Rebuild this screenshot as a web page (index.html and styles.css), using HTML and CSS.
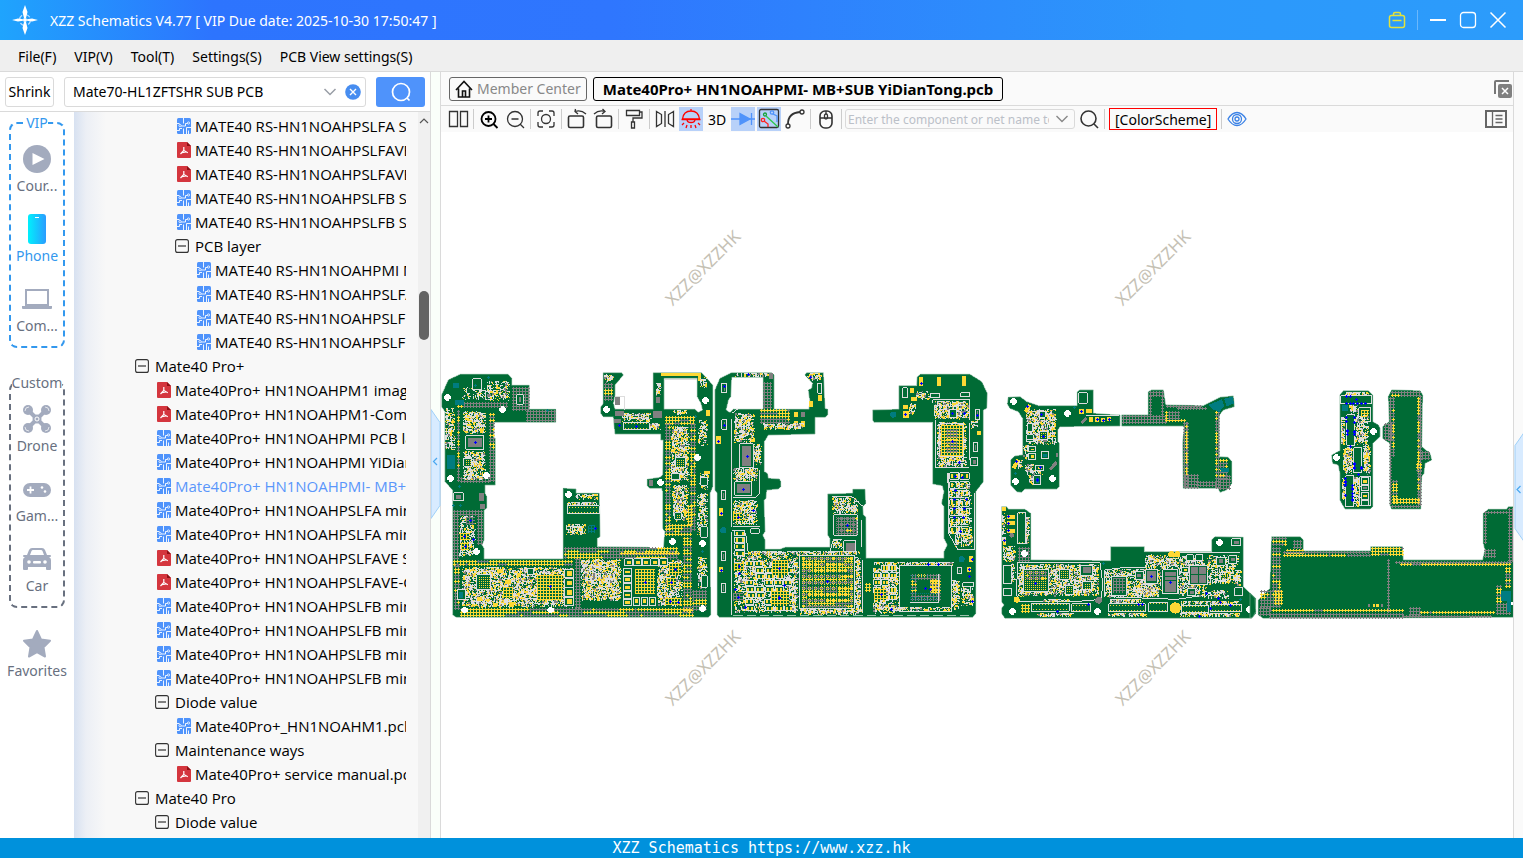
FILE: index.html
```html
<!DOCTYPE html>
<html lang="en">
<head>
  <meta charset="UTF-8" />
  <meta name="viewport" content="width=device-width, initial-scale=1.0"/>
  <title>XZZ Schematics</title>
  <link rel="stylesheet" href="styles.css">
</head>
<body>
  <!-- shared icons -->
  <svg class="defs" width="0" height="0" aria-hidden="true">
    <symbol id="i-pcb" viewBox="0 0 14 16">
      <rect width="14" height="16" rx="1.5" fill="#4f93fb"/>
      <path d="M6.500 0v5.500M0 5.500h2.500M4 8h4.500V5.500h2M0 12.500h2.500v-2h2.500M6.500 16v-5.500M9.500 16V9.500H14M11.500 16v-3.500" fill="none" stroke="#fff" stroke-width=".9"/>
      <circle cx="3" cy="7.500" r="1.100" fill="#4f93fb" stroke="#fff" stroke-width=".8"/><circle cx="11.500" cy="5" r="1.100" fill="#4f93fb" stroke="#fff" stroke-width=".8"/>
    </symbol>
    <symbol id="i-pdf" viewBox="0 0 14 16">
      <path d="M1 0h9l4 4v11a1 1 0 0 1-1 1H1a1 1 0 0 1-1-1V1a1 1 0 0 1 1-1z" fill="#d4363e"/>
      <path d="M10 0l4 4h-4z" fill="#8d1015"/>
      <path d="M6.800 5v3.500L3.500 12M6.800 8.500l4 2.200M5 10.700l4-.8" fill="none" stroke="#fff" stroke-width="1.200"/>
    </symbol>
    <symbol id="i-minus" viewBox="0 0 14 14">
      <rect x=".6" y=".6" width="12.800" height="12.800" rx="2" fill="none" stroke="#333" stroke-width="1.100"/>
      <path d="M3 7h8" stroke="#333" stroke-width="1.200"/>
    </symbol>
  </svg>

  <header class="titlebar">
    <svg class="logo" width="26" height="30" viewBox="0 0 26 30">
      <circle cx="13" cy="15" r="5.500" fill="none" stroke="#bfe0ff" stroke-width="1.200" stroke-dasharray="5 3.600"/>
      <path d="M13 0l2.500 7-1.500 6h-2l-1.500-6zM13 30l2.500-7-1.500-6h-2l-1.500 6zM0 15l6-1.500 5 .8v1.400l-5 .8zM26 15l-6-1.500-5 .8v1.400l5 .8z" fill="#fff"/>
      <circle cx="13" cy="15" r="2" fill="#fff"/>
    </svg>
    <span class="title">XZZ Schematics V4.77 [ VIP Due date: 2025-10-30 17:50:47 ]</span>
    <div class="window-buttons">
      <button aria-label="Toolbox"><svg width="20" height="20" viewBox="0 0 20 20" fill="none" stroke="#e3e23c" stroke-width="1.500"><rect x="2.500" y="5.500" width="15" height="12" rx="2"/><path d="M6.500 5.500V4q0-1.500 1.500-1.500h4q1.500 0 1.500 1.500v1.500M5.500 10.500h9"/></svg></button>
      <i></i>
      <button aria-label="Minimize"><svg width="20" height="20" viewBox="0 0 20 20"><path d="M2 10h16" stroke="#fff" stroke-width="2"/></svg></button>
      <button aria-label="Maximize"><svg width="20" height="20" viewBox="0 0 20 20"><rect x="2.500" y="2.500" width="15" height="15" rx="3" fill="none" stroke="#fff" stroke-width="1.300"/></svg></button>
      <button aria-label="Close"><svg width="20" height="20" viewBox="0 0 20 20"><path d="M2.500 2.500l15 15M17.500 2.500l-15 15" stroke="#fff" stroke-width="1.500"/></svg></button>
    </div>
  </header>

  <nav class="menubar">
    <button>File(F)</button>
    <button>VIP(V)</button>
    <button>Tool(T)</button>
    <button>Settings(S)</button>
    <button>PCB View settings(S)</button>
  </nav>

  <main>
    <aside class="left">
      <div class="search">
        <button class="shrink">Shrink</button>
        <div class="combo">
          <input type="text" aria-label="Search model" value="Mate70-HL1ZFTSHR SUB PCB">
          <svg width="14" height="10" viewBox="0 0 14 10"><path d="M1.500 2L7 7.500 12.500 2" fill="none" stroke="#999ea6" stroke-width="1.500"/></svg>
          <button aria-label="Clear"><svg width="16" height="16" viewBox="0 0 16 16"><circle cx="8" cy="8" r="7.800" fill="#478df0"/><path d="M5 5l6 6M11 5l-6 6" stroke="#fff" stroke-width="1.400"/></svg></button>
        </div>
        <button class="go" aria-label="Search"><svg width="22" height="22" viewBox="0 0 22 22" fill="none" stroke="#fff" stroke-width="1.700"><circle cx="11" cy="11" r="8.500"/><path d="M17 17l2.500 2.500"/></svg></button>
      </div>

      <div class="panel">
        <nav class="side">
          <fieldset class="vip">
            <legend>VIP</legend>
            <a href="#"><svg width="30" height="30" viewBox="0 0 30 30"><circle cx="15" cy="15" r="14" fill="#a3abbe"/><path d="M10.500 9v12l12-6z" fill="#fff"/></svg>Cour...</a>
            <a href="#" class="active"><svg width="30" height="30" viewBox="0 0 30 30"><defs><linearGradient id="ph"><stop stop-color="#00f0fc"/><stop offset="1" stop-color="#2a9cff"/></linearGradient></defs><rect x="6" width="18" height="30" rx="3" fill="url(#ph)"/><path d="M13 3.500h4" stroke="#fff"/></svg>Phone</a>
            <a href="#"><svg width="30" height="30" viewBox="0 0 30 30" fill="#a3abbe"><path d="M3 5h24v17H3zM5 7v13h20V7z" fill-rule="evenodd"/><path d="M0 22h30v2q0 1-1 1H1q-1 0-1-1z"/></svg>Com...</a>
          </fieldset>
          <fieldset class="custom">
            <legend>Custom</legend>
            <a href="#"><svg width="30" height="30" viewBox="0 0 30 30"><path d="M6 6l18 18M24 6L6 24" stroke="#a3abbe" stroke-width="4"/><g fill="#a3abbe"><circle cx="6" cy="6" r="5"/><circle cx="24" cy="6" r="5"/><circle cx="6" cy="24" r="5"/><circle cx="24" cy="24" r="5"/><circle cx="15" cy="15" r="4.500"/></g><path d="M3 7q0-4 4-4M23 3q4 0 4 4M3 23q0 4 4 4M23 27q4 0 4-4" fill="none" stroke="#fff" stroke-width=".7"/><circle cx="15" cy="15" r="2" fill="none" stroke="#fff"/></svg>Drone</a>
            <a href="#"><svg width="30" height="30" viewBox="0 0 30 30"><rect x="1" y="9" width="28" height="14" rx="7" fill="#a3abbe"/><path d="M5 16h7M8.500 12.500v7" stroke="#fff" stroke-width="1.800"/><circle cx="20" cy="13.500" r="1.300" fill="#fff"/><circle cx="23" cy="17.500" r="1.300" fill="#fff"/></svg>Gam...</a>
            <a href="#"><svg width="30" height="30" viewBox="0 0 30 30"><path d="M5 11l2-5q1-2 3-2h10q2 0 3 2l2 5h3q1 0 1 1t-1 1h-1q2 1 2 3v9q0 1-1 1h-3q-1 0-1-1v-2H6v2q0 1-1 1H2q-1 0-1-1v-9q0-2 2-3H2q-1 0-1-1t1-1zM8 11h14l-1.500-4q-.5-1-1.500-1h-8q-1 0-1.500 1z" fill="#a3abbe" fill-rule="evenodd"/><g fill="#fff"><circle cx="7" cy="18" r="1.800"/><circle cx="23" cy="18" r="1.800"/><rect x="11" y="17" width="8" height="2.500" rx="1"/></g></svg>Car</a>
          </fieldset>
          <a href="#" class="fav"><svg width="30" height="30" viewBox="0 0 30 30"><path d="M15 2l4 8.500 9 1.200-6.500 6.500 1.500 9.300-8-4.300-8 4.300 1.500-9.300L2 11.700l9-1.200z" fill="#a3abbe" stroke="#a3abbe" stroke-width="2" stroke-linejoin="round"/></svg>Favorites</a>
        </nav>

        <ul class="tree" id="tree"></ul>
        <div class="scrollbar">
          <svg width="12" height="8" viewBox="0 0 12 8"><path d="M2 6l4-4 4 4" fill="none" stroke="#555" stroke-width="1.200"/></svg>
          <div class="thumb"></div>
        </div>
      </div>
    </aside>

    <div class="gutter"><button class="handle" aria-label="Collapse left"><svg width="10" height="110" viewBox="0 0 10 110"><path d="M0 .5l9 13v83l-9 13z" fill="#d8ebff" stroke="#9fd0f8"/><path d="M6 49l-3.500 3.500L6 56" fill="none" stroke="#4aa8f0" stroke-width="1.200"/></svg></button></div>

    <section class="viewer">
      <div class="tabs">
        <button class="tab"><svg width="18" height="18" viewBox="0 0 18 18" fill="none" stroke="#111" stroke-width="1.600"><path d="M1 10L9 1.500 17 10M3.500 8.500v8.500h11V8.500M7.500 17v-6h3v6"/></svg>Member Center</button>
        <button class="tab current">Mate40Pro+ HN1NOAHPMI- MB+SUB YiDianTong.pcb</button>
        <button class="close-all" aria-label="Close all"><svg width="20" height="20" viewBox="0 0 20 20"><path d="M2 15V3q0-1 1-1h13" fill="none" stroke="#777" stroke-width="2"/><rect x="5" y="5" width="14" height="14" rx="2" fill="#808080"/><path d="M9 9l6 6M15 9l-6 6" stroke="#fff" stroke-width="1.500"/></svg></button>
      </div>

      <div class="toolbar">
        <button aria-label="Split"><svg viewBox="0 0 24 24"><path d="M3.500 4.500h8v15h-8zM14.500 4.500h7v15h-7z"/></svg></button>
        <i></i>
        <button aria-label="Zoom in"><svg viewBox="0 0 24 24"><g stroke="#000" stroke-width="1.800"><circle cx="11.500" cy="12" r="7"/><path d="M16.500 17l4 4M8 12h7M11.500 8.500v7"/></g></svg></button>
        <button aria-label="Zoom out"><svg viewBox="0 0 24 24"><circle cx="12" cy="12" r="7.500"/><path d="M17 17l4 4M8.500 12h7"/></svg></button>
        <i></i>
        <button aria-label="Fit"><svg viewBox="0 0 24 24"><circle cx="12" cy="12" r="4.500"/><path d="M4 9V6q0-2 2-2h3M15 4h3q2 0 2 2v3M20 15v3q0 2-2 2h-3M9 20H6q-2 0-2-2v-3"/></svg></button>
        <i></i>
        <button aria-label="Rotate right"><svg viewBox="0 0 24 24"><rect x="3.500" y="9" width="15" height="11.500" rx="1.500" stroke-width="1.600"/><path d="M10 4.500q6-2 11 2.500M10.500 2L10 4.500l3 2.500"/></svg></button>
        <button aria-label="Rotate left"><svg viewBox="0 0 24 24"><rect x="5.500" y="9" width="15" height="11.500" rx="1.500" stroke-width="1.600"/><path d="M3 7q5-4.500 11-2.500M11.500 2L14 4.500l-3 2.500"/></svg></button>
        <i></i>
        <button aria-label="Format"><svg viewBox="0 0 24 24"><path d="M4.500 3.500h13v5h-13zM17.500 5H20v6h-9v4M9.500 15h3v6h-3z"/></svg></button>
        <i></i>
        <button aria-label="Mirror"><svg viewBox="0 0 24 24"><path d="M3.500 4.500l5 3v9l-5 3zM20.500 4.500l-5 3v9l5 3zM12 4v16"/></svg></button>
        <button class="on" aria-label="Light"><svg viewBox="0 0 24 24"><g stroke="#f00" stroke-width="1.300"><path d="M3.500 12q1-8 8.500-8t8.500 8zM12 2v2M2.500 12.500h19M8 12.500q0 3 4 3t4-3M5 16l-2 2M8 18l-1 3M12 18v3M16 18l1 3M19 16l2 2"/></g></svg></button>
        <button>3D</button>
        <button class="on" aria-label="Diode"><svg viewBox="0 0 24 24"><path d="M0 12h24M20.500 6v12" stroke="#4f93fb"/><path d="M9 6.500l10 5.500-10 5.500z" fill="#4f93fb" stroke="#4f93fb"/></svg></button>
        <button class="on" aria-label="Nets"><svg viewBox="0 0 24 24"><rect x="2.500" y="2.500" width="19" height="18" rx="1.500"/><circle cx="8" cy="7.500" r="1.500" stroke="#1aa33a"/><path d="M9 9l12 11" stroke="#2cc84a"/><path d="M7 14l4 3v3" stroke="#f22"/><circle cx="6" cy="13" r="1.700" stroke="#f22"/><circle cx="15" cy="5.500" r="1.700" stroke="#4f93fb"/><path d="M16 7l4 2v6" stroke="#4f93fb"/></svg></button>
        <button aria-label="Curve"><svg viewBox="0 0 24 24"><circle cx="5" cy="19" r="2"/><circle cx="19" cy="5" r="2"/><path d="M5 17Q5 6 17 5" stroke-width="1.800"/></svg></button>
        <i></i>
        <button aria-label="Mouse"><svg viewBox="0 0 24 24"><rect x="6" y="4" width="12" height="17" rx="5" stroke-width="1.600"/><path d="M6 11h12M12 4v3"/><rect x="10.500" y="7" width="3" height="5" rx="1.500"/></svg></button>
        <i></i>
        <div class="net"><input type="text" aria-label="Component or net name" placeholder="Enter the component or net name to search"><svg width="14" height="10" viewBox="0 0 14 10"><path d="M1.500 2L7 7.500 12.500 2" fill="none" stroke="#888" stroke-width="1.400"/></svg></div>
        <button aria-label="Find"><svg viewBox="0 0 24 24"><circle cx="11.500" cy="11.500" r="7.500" stroke-width="1.600"/><path d="M17 17l4 4" stroke-width="1.600"/></svg></button>
        <i></i>
        <button class="scheme">[ColorScheme]</button>
        <i></i>
        <button aria-label="Show"><svg viewBox="0 0 24 24" class="eye"><path d="M3 12q4-6.500 9-6.500t9 6.500q-4 6.500-9 6.500T3 12z"/><circle cx="12" cy="12" r="4.500"/><circle cx="12" cy="12" r="2"/></svg></button>
        <button class="list" aria-label="Layer list"><svg viewBox="0 0 24 24"><g stroke="#666"><path d="M2 4h20v16H2z" stroke-width="2"/><path d="M8.500 4v16M11.500 8.500h7M11.500 12h7M11.500 15.500h7"/></g></svg></button>
      </div>

      <svg class="board" id="board" viewBox="441 132 1072 706" preserveAspectRatio="xMidYMin meet"></svg>
    </section>

    <div class="right-strip"><button class="handle" aria-label="Expand right"><svg width="10" height="110" viewBox="0 0 10 110"><path d="M10 .5l-9 13v83l9 13z" fill="#d8ebff" stroke="#9fd0f8"/><path d="M6.500 54L3 57.500 6.500 61" fill="none" stroke="#4aa8f0" stroke-width="1.200"/></svg></button></div>
  </main>

  <footer>XZZ Schematics https://www.xzz.hk</footer>

  <script src="board.js"></script>
</body>
</html>
```
FILE: styles.css
```css
* {
  box-sizing: border-box;
}

body {
  margin: 0;
  height: 100vh;
  display: flex;
  flex-direction: column;
  overflow: hidden;
  background: #fff;
  color: #000;
  font-family: 'Noto Sans', 'Open Sans', sans-serif;
  font-size: 14px;
}

button, input {
  font: inherit;
  color: inherit;
  margin: 0;
  padding: 0;
  border: none;
  background: none;
}

a {
  color: inherit;
  text-decoration: none;
}

svg {
  display: block;
  flex: none;
}

.defs {
  position: absolute;
}

/* title bar */
.titlebar {
  flex: none;
  height: 40px;
  display: flex;
  align-items: center;
  padding: 0 15px 0 12px;
  background: linear-gradient(90deg, #1fa4fd, #2d74fe 14%, #2f76fe 40%, #2c98fb 78%, #2c9cfb);
  color: #fff;
}

.title {
  margin-left: 12px;
}

.window-buttons {
  margin-left: auto;
  display: flex;
  align-items: center;
  gap: 10px;
}

.window-buttons i {
  width: 1px;
  height: 20px;
  background: #6bb8fc;
}

.menubar {
  flex: none;
  height: 32px;
  display: flex;
  align-items: center;
  gap: 18px;
  padding: 2px 18px 0;
  background: #efefef;
  border-bottom: 1px solid #dadada;
}

main {
  flex: 1;
  min-height: 0;
  display: flex;
}

/* left side */
.left {
  width: 431px;
  flex: none;
  display: flex;
  flex-direction: column;
  border-right: 1px solid #dadada;
}

.search {
  flex: none;
  height: 40px;
  display: flex;
  align-items: center;
  padding: 0 5px;
  border-bottom: 1px solid #dadada;
}

.shrink {
  width: 49px;
  height: 30px;
  border: 1px solid #dadada;
  border-radius: 3px;
}

.combo {
  flex: 1;
  height: 30px;
  margin: 0 10px;
  padding: 0 4px 0 8px;
  display: flex;
  align-items: center;
  gap: 8px;
  border: 1px solid #dadada;
  border-radius: 3px;
}

.combo input {
  flex: 1;
  min-width: 0;
}

.go {
  width: 49px;
  height: 30px;
  display: flex;
  align-items: center;
  justify-content: center;
  background: #4f93fb;
  border-radius: 3px;
}

.panel {
  flex: 1;
  min-height: 0;
  display: flex;
}

.side {
  width: 74px;
  flex: none;
  padding-top: 1px;
  color: #68707f;
  text-align: center;
}

fieldset {
  min-width: 0;
  height: 235px;
  margin: 0 9px 25px;
  padding: 0;
  border: 2px dashed #68707f;
  border-radius: 8px;
}

fieldset.vip {
  border-color: #3398ee;
}

fieldset.custom {
  margin-bottom: 10px;
}

legend {
  margin: 0 auto;
  padding: 0;
  line-height: 20px;
}

.vip legend, .side .active {
  color: #3398ee;
}

.side a {
  height: 70px;
  display: flex;
  flex-direction: column;
  align-items: center;
  line-height: 20px;
  padding-top: 11px;
  gap: 2px;
}

.tree {
  flex: 1;
  min-width: 0;
  margin: 0;
  padding: 2px 12px 0 61px;
  overflow: hidden;
  list-style: none;
  font-family: 'Open Sans', sans-serif;
  font-size: 15px;
  background: linear-gradient(90deg, #d7e1f1, #eceff5 12px, #f8f8f8 32px);
}

.tree li {
  height: 24px;
  display: flex;
  align-items: center;
  white-space: nowrap;
  overflow: hidden;
}

.tree svg {
  margin-right: 6px;
}

.tree .file svg {
  margin: 0 4px 0 2px;
}

.tree .d1 { padding-left: 20px; }
.tree .d2 { padding-left: 40px; }
.tree .d3 { padding-left: 60px; }

.tree .selected {
  color: #5a96fb;
}

.scrollbar {
  width: 12px;
  padding-top: 5px;
  background: #f0f0f0;
}

.thumb {
  width: 10px;
  height: 49px;
  margin: 166px 1px 0;
  background: #636363;
  border-radius: 5px;
}

.gutter, .right-strip {
  flex: none;
  width: 9px;
  position: relative;
  background: #fafffa;
}

.right-strip {
  width: 10px;
  border-left: 1px solid #dadada;
  background: #fafafa;
}

/* handles hang over the panel edges */
.handle {
  position: absolute;
  left: 0;
  top: 44%;
}

.right-strip .handle {
  top: 47%;
}

/* viewer */
.viewer {
  flex: 1;
  min-width: 0;
  display: flex;
  flex-direction: column;
  border-left: 1px solid #dadada;
}

.tabs {
  flex: none;
  height: 34px;
  display: flex;
  align-items: center;
  gap: 6px;
  padding: 0 0 0 8px;
  background: #fafafa;
  border-bottom: 1px solid #dadada;
}

.tab {
  height: 24px;
  display: flex;
  align-items: center;
  gap: 4px;
  padding: 0 5px;
  border: 1px solid #666;
  border-radius: 3px;
  color: #888;
}

.tab.current {
  padding: 0 9px;
  border-color: #000;
  color: #000;
  font-size: 15px;
  font-weight: bold;
}

.close-all {
  margin-left: auto;
}

.toolbar {
  flex: none;
  height: 26px;
  display: flex;
  align-items: center;
  gap: 2px;
  padding: 0 5px;
  background: #fafafa;
}

.toolbar button {
  min-width: 24px;
  height: 24px;
}

.toolbar svg {
  fill: none;
  stroke: #333;
  stroke-width: 1.3px;
}

.toolbar i {
  width: 1px;
  height: 20px;
  margin: 0 1px;
  background: #ccc;
}

.toolbar .on {
  background: #b8d1f9;
}

.net {
  width: 230px;
  height: 20px;
  display: flex;
  align-items: center;
  padding: 0 5px 0 2px;
  border: 1px solid #dadada;
  border-radius: 3px;
}

.net input {
  flex: 1;
  min-width: 0;
  margin-right: 6px;
  font-size: 12px;
}

.net input::placeholder {
  color: #bbc0c8;
}

.toolbar .scheme {
  height: 22px;
  margin: 0 1px;
  padding: 0 5px;
  border: 1px solid #f00;
}

.toolbar .eye {
  stroke: #3b82e6;
}

.toolbar .list {
  margin-left: auto;
}

.board {
  width: 100%;
  flex: 1;
  min-height: 0;
}

.board g {
  shape-rendering: crispEdges;
}

.board text {
  font-size: 17px;
  fill: #c5c1b4;
  text-anchor: middle;
}

footer {
  flex: none;
  height: 20px;
  line-height: 20px;
  background: #0091dc;
  color: #fff;
  font-family: 'DejaVu Sans Mono', monospace;
  font-size: 15px;
  text-align: center;
}
```
FILE: board.js
```js
// file tree: [depth, type, text]
const files = [
  [2, 'pcb', 'MATE40 RS-HN1NOAHPSLFA SU'],
  [2, 'pdf', 'MATE40 RS-HN1NOAHPSLFAVE'],
  [2, 'pdf', 'MATE40 RS-HN1NOAHPSLFAVE'],
  [2, 'pcb', 'MATE40 RS-HN1NOAHPSLFB SU'],
  [2, 'pcb', 'MATE40 RS-HN1NOAHPSLFB SU'],
  [2, 'minus', 'PCB layer'],
  [3, 'pcb', 'MATE40 RS-HN1NOAHPMI M'],
  [3, 'pcb', 'MATE40 RS-HN1NOAHPSLFA'],
  [3, 'pcb', 'MATE40 RS-HN1NOAHPSLFB'],
  [3, 'pcb', 'MATE40 RS-HN1NOAHPSLFB'],
  [0, 'minus', 'Mate40 Pro+'],
  [1, 'pdf', 'Mate40Pro+ HN1NOAHPM1 imag'],
  [1, 'pdf', 'Mate40Pro+ HN1NOAHPM1-Comp'],
  [1, 'pcb', 'Mate40Pro+ HN1NOAHPMI PCB la'],
  [1, 'pcb', 'Mate40Pro+ HN1NOAHPMI YiDian'],
  [1, 'pcb', 'Mate40Pro+ HN1NOAHPMI- MB+', true],
  [1, 'pcb', 'Mate40Pro+ HN1NOAHPSLFA min'],
  [1, 'pcb', 'Mate40Pro+ HN1NOAHPSLFA min'],
  [1, 'pdf', 'Mate40Pro+ HN1NOAHPSLFAVE S'],
  [1, 'pdf', 'Mate40Pro+ HN1NOAHPSLFAVE-C'],
  [1, 'pcb', 'Mate40Pro+ HN1NOAHPSLFB min'],
  [1, 'pcb', 'Mate40Pro+ HN1NOAHPSLFB min'],
  [1, 'pcb', 'Mate40Pro+ HN1NOAHPSLFB min'],
  [1, 'pcb', 'Mate40Pro+ HN1NOAHPSLFB min'],
  [1, 'minus', 'Diode value'],
  [2, 'pcb', 'Mate40Pro+_HN1NOAHM1.pcb'],
  [1, 'minus', 'Maintenance ways'],
  [2, 'pdf', 'Mate40Pro+ service manual.pdf'],
  [0, 'minus', 'Mate40 Pro'],
  [1, 'minus', 'Diode value']
];

document.getElementById('tree').innerHTML = files.map(([d, type, text, sel]) => {
  const h = type === 'minus' ? 14 : 16;
  return `<li class="d${d}${type === 'minus' ? '' : ' file'}${sel ? ' selected' : ''}"><svg width="14" height="${h}"><use href="#i-${type}"/></svg>${text}</li>`;
}).join('');

// boards are drawn on a grid three times finer than the view
const WHITE = '#ddd', YELLOW = '#fdd835', GRAY = '#808080', GREEN = '#006b35', BLUE = '#00f', TEAL = '#007c80';
let seed = 7;
let out = '';

function rnd() {
  seed = (seed * 16807) % 2147483647;
  return seed / 2147483647;
}
function snap(v) { return Math.round(v / 3) * 3; }
function box(c, x, y, w, h) {
  out += `<path fill="${c}" d="M${x} ${y}h${w}v${h}h${-w}z"/>`;
}
function frame(x, y, w, h) {
  out += `<path fill="none" stroke="${WHITE}" stroke-width="3" d="M${x} ${y}h${w}v${h}h${-w}z"/>`;
}

// small passive parts packed together
function parts(x, y, w, h, fill = 0.3) {
  const d = { [WHITE]: '', [YELLOW]: '', [GRAY]: '' };
  const n = w * h / 9 * fill;
  for (let i = 0; i < n * 0.4; i++) {
    const len = 3 * (1 + Math.floor(rnd() * 4));
    const px = x + snap(rnd() * (w - len)), py = y + snap(rnd() * (h - len));
    d[WHITE] += rnd() < 0.5 ? `M${px} ${py}h${len}v3h${-len}z` : `M${px} ${py}h3v${len}h-3z`;
  }
  for (let i = 0; i < n * 0.28; i++) {
    const c = rnd() < 0.7 ? YELLOW : GRAY;
    const s = rnd() < 0.15 ? 6 : 3;
    d[c] += `M${x + snap(rnd() * (w - s))} ${y + snap(rnd() * (h - s))}h${s}v${s}h${-s}z`;
  }
  for (const c in d) out += `<path fill="${c}" d="${d[c]}"/>`;
}

// strip of stitching vias, some of them exposed
function vias(x, y, w, h, yellow = 0) {
  let g = '', q = '';
  const share = yellow < 0.9 ? yellow * 0.8 : 0.95;
  for (let py = y; py < y + h - 3; py += 9) {
    let on = rnd() < share;
    for (let px = x; px < x + w - 3; px += 9) {
      if (rnd() < 0.2) on = rnd() < share;
      const p = `M${px + 3} ${py}h3v3h3v3h-3v3h-3v-3h-3v-3h3z`;
      if (on) q += p; else g += p;
    }
  }
  out += `<path fill="${GRAY}" d="${g}"/><path fill="${YELLOW}" d="${q}"/>`;
}

// ball grid chip
function bga(x, y, w, h, c = YELLOW, bg = GREEN) {
  box(bg, x, y, w, h);
  frame(x, y, w, h);
  let d = '';
  for (let py = y + 6; py < y + h - 4; py += 6)
    for (let px = x + 6; px < x + w - 4; px += 6) d += `M${px} ${py}h3v3h-3z`;
  out += `<path fill="${c}" d="${d}"/>`;
}
function chip(x, y, w, h, c = GRAY) {
  box(GREEN, x, y, w, h);
  frame(x, y, w, h);
  box(c, x + 6, y + 6, w - 12, h - 12);
}
function grid(x, y, w, h, c = YELLOW) {
  box(GREEN, x, y, w, h);
  let d = '';
  for (let px = x; px <= x + w; px += 9) d += `M${px} ${y}v${h}`;
  for (let py = y; py <= y + h; py += 9) d += `M${x} ${py}h${w}`;
  out += `<path stroke="${c}" stroke-width="3" d="${d}"/>`;
}
// two yellow terminals in a white outline
function part2(x, y, w, h) {
  box(GREEN, x, y, w, h);
  frame(x, y, w, h);
  box(YELLOW, x + 3, y + 3, 6, h - 6);
  box(YELLOW, x + w - 9, y + 3, 6, h - 6);
}
function socket(x, y, w, h) {
  box(GREEN, x, y, w, h);
  frame(x, y, w, h);
  out += `<path stroke="${YELLOW}" stroke-width="3" stroke-dasharray="3 6" d="M${x + 4} ${y + 4}h${w - 8}M${x + 4} ${y + h - 4}h${w - 8}"/>`;
}
function pads(c, list) { list.forEach(p => box(c, ...p)); }
function holes(list) {
  list.forEach(([x, y]) => { out += `<path fill="#fff" d="M${x - 4} ${y - 10}h8l2 4 4 2v8l-4 2-2 4h-8l-2-4-4-2v-8l4-2z"/>`; });
}
function dots(list, c = BLUE) {
  list.forEach(([x, y]) => { out += `<path fill="${c}" d="M${x - 2} ${y - 5}h4v3h3v4h-3v3h-4v-3h-3v-4h3z"/>`; });
}
function line(d) { out += `<path fill="none" stroke="${WHITE}" stroke-width="3" d="${d}"/>`; }
function outline(d) {
  out += `<path d="${d}" fill="${GREEN}" fill-rule="evenodd" stroke="#73aa8c" stroke-width="2" stroke-linejoin="round"/>`;
}
function sheet(x, y, draw) {
  out += `<g transform="translate(${x} ${y}) scale(0.33333)">`;
  draw();
  out += '</g>';
}

// main board, front
sheet(440, 360, () => {
  outline('M60 43L205 43 215 55 215 76 268 76 268 148 347 148 347 187 162 187 162 235 166 235 166 375 135 375 135 400 140 410 140 445 132 450 132 540 126 555 132 565 132 597 370 597 370 385 408 387 408 400 478 400 480 530 472 535 472 560 625 562 630 567 670 567 675 515 668 505 668 395 665 385 630 385 622 378 622 358 660 352 668 345 670 240 662 240 662 222 525 222 520 170 490 170 482 160 482 142 490 130 490 38 545 38 550 45 525 75 525 105 520 130 525 148 640 148 640 38 785 38 818 75 818 380 810 400 812 765 805 772 50 772 38 765 38 390 15 365 15 155 5 140 5 105 25 60zM672 55L672 148 765 148 775 157 788 150 783 130 772 110 772 55z');
  vias(216, 80, 50, 70); vias(258, 150, 85, 36); vias(50, 126, 150, 18, 0.6);
  vias(50, 150, 12, 216, 0.5); vias(146, 160, 18, 210, 0.3); vias(60, 352, 90, 20, 0.2);
  parts(66, 82, 76, 40, 0.3); chip(98, 57, 26, 32, GREEN); chip(136, 96, 24, 22); parts(140, 62, 70, 60, 0.55);
  chip(230, 105, 20, 28); parts(16, 145, 32, 128, 0.6); box(TEAL, 22, 285, 24, 42); box(TEAL, 40, 70, 18, 14); box(TEAL, 45, 120, 26, 15);
  parts(70, 152, 70, 70, 0.9); chip(78, 228, 54, 40); parts(70, 272, 68, 88, 0.85); bga(72, 295, 24, 24);
  chip(42, 398, 28, 24); box(GRAY, 118, 398, 14, 24); box(GRAY, 120, 432, 15, 14);
  vias(40, 450, 85, 14); vias(40, 464, 16, 140); vias(110, 464, 14, 90); parts(58, 466, 50, 126, 0.6);
  grid(80, 472, 26, 22, GRAY); grid(62, 520, 24, 20); grid(64, 552, 24, 18);
  vias(40, 600, 360, 16, 0.6); vias(372, 560, 345, 32, 0.5); vias(540, 576, 178, 12, 1);
  vias(42, 616, 18, 130, 0.4); vias(60, 744, 700, 22, 0.5); vias(404, 594, 18, 150);
  parts(66, 622, 336, 122, 0.95); bga(110, 644, 42, 46); grid(292, 646, 76, 72, YELLOW); grid(190, 684, 30, 30, YELLOW);
  chip(264, 626, 18, 18, GREEN); chip(52, 690, 24, 30, TEAL);
  pads(YELLOW, [[172, 628, 18, 12], [230, 640, 14, 12], [196, 660, 18, 12], [112, 710, 14, 14], [208, 726, 14, 14], [160, 730, 12, 12]]);
  for (let i = 0; i < 4; i++) chip(374, 628 + i * 28, 28, 26, YELLOW);
  parts(424, 598, 122, 126, 1.1); box(GREEN, 426, 724, 58, 14);
  grid(586, 628, 58, 74, YELLOW); parts(650, 596, 78, 144, 0.8); grid(690, 612, 34, 34); grid(682, 656, 26, 22); grid(676, 716, 50, 20);
  for (let i = 0; i < 5; i++) { chip(555 + i * 26, 596, 24, 22, YELLOW); chip(550, 626 + i * 23, 26, 20, YELLOW); }
  for (let i = 0; i < 3; i++) chip(580 + i * 24, 712, 20, 24, YELLOW);
  vias(730, 530, 26, 220, 0.6); vias(756, 690, 46, 60, 0.5); vias(676, 500, 80, 26, 0.4);
  parts(406, 402, 70, 18, 0.7); parts(378, 425, 100, 14, 0.7); socket(382, 438, 96, 24); parts(378, 492, 62, 34, 0.7); grid(446, 498, 20, 20, TEAL);
  parts(492, 42, 30, 26, 0.7); vias(492, 68, 30, 56, 0.2); parts(546, 160, 90, 28, 0.8); socket(550, 188, 78, 22); parts(630, 190, 32, 24, 0.7);
  pads(GRAY, [[525, 152, 26, 16], [522, 176, 22, 14], [525, 112, 14, 24], [640, 152, 26, 22], [648, 112, 12, 18], [626, 360, 14, 18]]);
  pads(YELLOW, [[662, 40, 122, 8], [774, 48, 10, 14], [798, 150, 12, 18], [792, 332, 18, 10]]);
  line('M525 110h29v40M672 60h100');
  parts(648, 68, 18, 38, 0.7); parts(700, 150, 44, 14, 0.8); vias(674, 168, 88, 22, 0.8); vias(676, 190, 14, 320, 0.6); vias(750, 190, 14, 320, 0.5);
  parts(692, 198, 56, 170, 0.95); bga(706, 294, 30, 30); chip(694, 340, 26, 18, GREEN); parts(696, 374, 52, 110, 0.85); bga(704, 458, 20, 20); vias(684, 492, 72, 18, 1);
  vias(740, 436, 20, 60, 1);
  parts(774, 180, 32, 80, 0.5); parts(776, 340, 30, 50, 0.5); parts(772, 400, 34, 130, 0.6); parts(772, 590, 32, 96, 0.6);
  chip(782, 352, 20, 24, GREEN); chip(782, 500, 20, 32, GREEN); chip(784, 648, 18, 34, GREEN); parts(780, 52, 24, 34, 0.4);
  holes([[22, 112], [188, 149], [32, 355], [139, 346], [109, 575], [499, 149], [386, 404], [661, 368], [772, 293], [796, 121], [698, 545], [788, 550], [788, 746], [74, 750], [332, 750]]);
  dots([[106, 247], [91, 482], [73, 530], [101, 539], [76, 560], [538, 197], [589, 200], [466, 506], [332, 680], [616, 668], [706, 629], [695, 668], [691, 725], [715, 728]]);
  dots([[145, 52], [106, 77], [58, 380], [61, 437], [40, 437], [788, 575], [322, 152], [766, 170]], TEAL);
});

// main board, back
sheet(710, 360, () => {
  outline('M65 38L185 38 192 45 192 148 297 148 300 125 295 90 305 85 308 70 285 45 290 38 340 38 345 145 353 148 353 165 345 172 315 172 315 222 175 225 163 245 163 335 172 340 175 355 208 357 212 365 212 380 205 387 170 390 168 415 162 420 165 515 158 525 165 540 165 568 210 568 225 562 360 562 360 535 353 525 353 402 428 400 428 388 465 388 467 430 458 440 460 465 467 470 468 595 702 595 702 575 712 555 702 535 702 440 695 430 702 395 697 377 668 372 668 187 492 187 488 180 488 150 567 148 567 77 620 77 622 50 632 43 780 43 815 65 832 100 830 145 820 150 820 365 797 395 797 760 788 772 28 772 22 765 22 400 15 390 15 90 30 55zM65 52L62 110 55 120 48 150 60 158 70 148 160 148 160 52z');
  parts(68, 40, 108, 12, 0.6); vias(160, 66, 28, 80); vias(150, 146, 88, 40, 0.4); box(GRAY, 177, 40, 12, 16);
  parts(72, 158, 62, 90, 0.8); chip(90, 252, 40, 72); parts(132, 250, 24, 66, 0.7); parts(70, 324, 76, 40, 0.8);
  chip(74, 366, 52, 40); parts(70, 420, 74, 76, 0.85); grid(72, 460, 24, 24);
  line('M66 178V500M66 160l18-14M150 330v70l-15 14H68M150 500H70M66 515V765');
  line('M115 580l-8-60-40-10M70 580h42');
  pads(YELLOW, [[18, 228, 14, 24], [26, 444, 14, 24], [28, 622, 10, 14], [252, 156, 12, 16], [252, 184, 12, 16], [273, 184, 12, 16], [298, 124, 10, 16], [325, 106, 10, 16], [205, 194, 20, 14]]);
  pads(GRAY, [[273, 156, 12, 16]]);
  for (let i = 0; i < 4; i++) part2(74, 512 + i * 20, 30, 16);
  [[36, 70], [36, 180], [34, 392], [34, 575], [34, 670]].forEach(p => chip(p[0], p[1], 14, 28));
  chip(122, 506, 26, 14); chip(324, 70, 12, 30); parts(160, 188, 124, 22, 0.7); parts(290, 40, 46, 24, 0.6);
  parts(72, 586, 178, 174, 0.7);
  for (let i = 0; i < 8; i++) for (let j = 0; j < 5; j++) if (rnd() < 0.75) part2(106 + j * 29 + (i % 3) * 3, 604 + i * 19, 24, 15);
  grid(74, 610, 28, 24); grid(188, 602, 46, 44); grid(186, 694, 50, 44); grid(72, 700, 26, 22, GRAY);
  parts(110, 572, 340, 14, 1); parts(246, 590, 20, 170, 0.8); parts(266, 746, 190, 18, 0.9); parts(436, 590, 20, 160, 0.8);
  bga(270, 586, 164, 160, YELLOW); vias(276, 592, 152, 150, 0.6);
  out += `<path stroke="${GREEN}" stroke-width="3" d="M290 640h130M290 676h130M290 712h130M310 600v130M346 600v130M382 600v130"/>`;
  parts(366, 410, 80, 52, 0.75); bga(372, 464, 70, 62, GRAY); vias(380, 470, 58, 50, 0.2); parts(370, 540, 30, 28, 0.7); box(GRAY, 408, 548, 26, 24); frame(402, 542, 36, 34);
  line('M366 410h60l34 30M360 575l10-36h26M456 480v80M458 600v160');
  parts(492, 606, 240, 12, 0.8); parts(490, 620, 78, 140, 0.8);
  for (let i = 0; i < 5; i++) for (let j = 0; j < 3; j++) if ((i + j) % 4) part2(492 + j * 24, 616 + i * 22, 21, 16);
  grid(494, 688, 34, 32); box(GREEN, 568, 616, 156, 140); frame(568, 616, 156, 140);
  vias(602, 642, 86, 84, 0.3); box(GREEN, 620, 660, 40, 44); vias(664, 656, 24, 40, 1); line('M600 728h86v-86');
  out += `<path stroke="${TEAL}" stroke-width="3" stroke-dasharray="3 3" d="M600 648h60M600 660h24M600 690h24M600 702h84M600 714h84M600 720h84"/>`;
  parts(726, 660, 24, 90, 0.8); parts(500, 740, 225, 12, 0.6); vias(464, 670, 16, 28, 1);
  pads(YELLOW, [[680, 50, 12, 28], [755, 48, 12, 30], [626, 52, 14, 26], [600, 84, 12, 16], [580, 136, 14, 12], [580, 154, 18, 20], [604, 112, 16, 12], [634, 98, 12, 14], [802, 212, 11, 14], [778, 588, 12, 18], [770, 622, 12, 14], [782, 708, 11, 22]]);
  chip(578, 84, 14, 30); chip(662, 100, 28, 12); chip(752, 98, 28, 12); chip(796, 148, 14, 30); chip(790, 248, 14, 28); chip(758, 668, 34, 12); chip(742, 624, 14, 18);
  parts(616, 92, 50, 28, 0.5); parts(598, 130, 22, 40, 0.5); parts(672, 122, 106, 56, 1); chip(718, 150, 22, 22, GREEN);
  parts(680, 186, 90, 136, 0.9); grid(694, 196, 64, 90); vias(708, 206, 38, 70, 0.1); frame(690, 192, 72, 98); chip(782, 294, 22, 24);
  line('M668 130v-10h112v60M676 180v144h100M780 190v110M716 340v180l28 50h50V400M716 400l-4-60');
  for (let i = 0; i < 7; i++) { part2(720, 338 + i * 27, 26, 20); part2(750, 338 + i * 27, 28, 20); }
  parts(716, 366, 70, 160, 0.3); parts(736, 520, 54, 44, 0.6); parts(752, 680, 40, 60, 0.5); parts(780, 180, 30, 30, 0.3);
  out += `<path fill="none" stroke="#9bc3ad" stroke-width="3" stroke-dasharray="28 12" d="M70 768h720"/>`;
  dots([[43, 79], [115, 43], [43, 196], [25, 244], [112, 290], [100, 388], [130, 452], [85, 472], [34, 461], [301, 52], [412, 497], [89, 620], [208, 626], [88, 641], [34, 632], [352, 665], [224, 677], [77, 688], [85, 713], [208, 714], [106, 743], [634, 70], [586, 164], [728, 161], [763, 161], [802, 167], [728, 245], [748, 308], [736, 350], [757, 352], [736, 392], [733, 419], [769, 419], [733, 446], [763, 446], [733, 473], [760, 473], [751, 515], [656, 614], [685, 614], [787, 599], [778, 629], [778, 650], [646, 686], [661, 689], [514, 704], [545, 749], [788, 725]]);
  out += `<g fill="${TEAL}"><circle cx="550" cy="164" r="9"/><circle cx="40" cy="511" r="9"/><circle cx="755" cy="598" r="9"/></g>`;
});

// sub boards
sheet(990, 380, () => {
  outline('M55 52L90 50 110 65 145 77 262 77 262 35 270 30 310 30 310 100 380 105 390 105 390 138 210 140 203 150 203 185 208 190 208 320 200 327 105 327 95 337 80 335 62 315 62 240 75 228 98 225 98 115 85 95 60 85 52 72z');
  outline('M395 105L475 105 475 35 485 30 520 30 527 75 640 77 690 52 730 48 733 80 700 90 688 105 688 230 715 232 725 245 725 310 710 330 690 337 685 325 580 325 578 190 583 138 395 138z');
  outline('M35 380L50 380 55 388 105 388 122 400 122 540 362 542 362 500 463 500 463 515 665 515 665 480 675 470 760 472 760 620 797 655 797 700 785 715 45 715 35 700 35 685 42 675 35 665z');
  parts(108, 88, 92, 108, 0.9); chip(112, 130, 16, 24, GREEN); chip(148, 94, 18, 18, GREEN); bga(148, 154, 24, 26); chip(110, 164, 20, 22, GREEN);
  parts(98, 196, 24, 46, 0.6); chip(116, 200, 22, 16, YELLOW); chip(116, 220, 22, 20, YELLOW); chip(154, 216, 22, 20, TEAL);
  parts(106, 252, 56, 34, 0.6); chip(138, 256, 24, 16, YELLOW); parts(110, 286, 42, 30, 0.7); chip(132, 288, 20, 26, TEAL);
  out += `<path fill="${GRAY}" d="M176 266l20-22 7 6-20 22zM272 126l13-15 7 6-13 15z"/><path fill="${YELLOW}" d="M66 262l14-26 10 6-14 26zM102 92l14-20 8 6-14 20z"/>`;
  parts(84, 236, 14, 30, 0.6); chip(266, 38, 26, 32, GREEN); pads(YELLOW, [[267, 86, 14, 16], [288, 88, 18, 11], [297, 112, 12, 14], [316, 112, 12, 14], [334, 115, 12, 12], [352, 112, 12, 12]]);
  line('M288 106h100M112 180h60'); box(GRAY, 198, 218, 7, 12);
  vias(396, 106, 84, 30); vias(478, 32, 44, 14); vias(478, 46, 10, 60); vias(512, 46, 12, 60); vias(478, 106, 50, 28); vias(528, 76, 110, 12, 0.3); vias(560, 82, 90, 10, 0.6);
  vias(526, 118, 64, 10, 1); vias(526, 92, 10, 30, 1); vias(534, 94, 36, 22); vias(578, 126, 14, 196); vias(586, 126, 10, 160, 0.8); vias(682, 92, 10, 230); vias(674, 92, 10, 230, 0.7); vias(582, 282, 40, 40, 0.1); vias(618, 304, 64, 18, 0.5); vias(688, 286, 32, 42);
  vias(688, 236, 30, 60, 0.2);
  out += `<g fill="${TEAL}"><path d="M655 75l40-17 8 20-15 18-20-8zM702 56l26-6 4 20-22 10zM690 265l28 0v12h-24z"/></g>`;
  pads(YELLOW, [[50, 404, 26, 12], [50, 424, 26, 12], [50, 446, 26, 12], [38, 474, 10, 20], [37, 382, 12, 10]]);
  parts(36, 400, 12, 90, 0.5); socket(84, 398, 24, 94); parts(108, 410, 12, 80, 0.9); parts(38, 498, 40, 48, 0.8); vias(84, 500, 36, 44); chip(42, 556, 24, 56, GREEN); parts(64, 548, 14, 60, 0.6); chip(40, 626, 26, 22, GREEN);
  parts(84, 552, 244, 98, 0.9); bga(100, 568, 76, 68); vias(108, 574, 58, 30, 0.1); bga(208, 568, 30, 30); bga(226, 616, 26, 28); bga(278, 606, 28, 24); chip(272, 556, 36, 30);
  line('M82 548h248l8 60-4 50-90 8H90l-10-20zM345 570l60-8h60l20-40M344 650V570M560 518h190M350 650l210 8 80-12');
  parts(346, 566, 170, 86, 0.8); chip(364, 590, 46, 56); grid(370, 596, 34, 44, GRAY); chip(436, 576, 24, 22); chip(466, 568, 38, 42); parts(430, 620, 80, 30, 0.8);
  parts(466, 524, 180, 44, 0.75); parts(562, 560, 90, 90, 0.7); chip(518, 570, 46, 72); chip(598, 556, 56, 58);
  out += `<path stroke="${GREEN}" stroke-width="3" d="M626 562v46M603 584h46M524 590h34M524 602h34"/>`;
  bga(692, 576, 30, 30);
  parts(650, 524, 98, 90, 0.55); chip(680, 532, 26, 24); chip(716, 528, 24, 22); chip(726, 476, 26, 22); parts(738, 570, 18, 50, 0.6); chip(734, 624, 24, 24, GREEN);
  chip(576, 562, 20, 16, YELLOW); chip(590, 524, 20, 18, GREEN); chip(618, 524, 20, 18, GREEN); chip(594, 626, 24, 22); parts(640, 630, 80, 28, 0.5);
  out += `<g fill="${YELLOW}"><circle cx="544" cy="523" r="9"/><circle cx="562" cy="523" r="9"/><circle cx="556" cy="684" r="17"/><circle cx="80" cy="659" r="9"/></g>`;
  parts(160, 656, 80, 12, 0.7); parts(360, 656, 100, 12, 1.2); parts(350, 700, 120, 12, 0.9); parts(570, 664, 180, 12, 0.9); parts(570, 700, 180, 12, 0.9); parts(140, 700, 110, 12, 0.8); vias(94, 672, 24, 24, 1);
  socket(124, 670, 114, 24); socket(246, 672, 56, 24); socket(356, 672, 110, 24); socket(476, 668, 58, 28); socket(576, 676, 80, 22); socket(662, 674, 94, 22);
  out += `<circle cx="326" cy="661" r="10" fill="${GRAY}"/><circle cx="65" cy="466" r="7" fill="${GRAY}"/>`;
  holes([[71, 64], [232, 100], [77, 304], [187, 296], [103, 521], [67, 694], [322, 694], [689, 488], [778, 688]]);
  dots([[112, 79], [155, 103], [161, 170], [80, 245], [151, 263], [142, 300], [274, 94], [322, 118], [340, 121], [358, 118], [55, 409], [55, 430], [55, 451], [43, 482], [137, 611], [484, 590], [542, 608], [203, 695], [296, 674], [446, 674], [458, 674], [649, 641], [686, 656], [691, 668], [661, 686], [722, 677], [629, 709]]);
  dots([[253, 82], [76, 280], [340, 550], [752, 659], [164, 226]], TEAL);
});

sheet(1250, 380, () => {
  outline('M280 32L355 32 368 45 368 125 385 135 390 145 390 170 368 190 368 380 360 387 285 387 278 375 270 360 270 280 265 255 248 250 245 225 270 212 270 45z');
  outline('M425 30L510 32 518 45 515 200 540 220 545 240 525 250 522 280 515 290 512 387 425 387 420 375 420 190 398 175 398 140 418 125 415 50z');
  outline('M65 470L150 470 160 480 160 513 362 513 362 500 457 500 460 540 698 540 705 510 700 490 700 400 715 388 770 388 775 380 790 380 790 712 40 715 25 705 25 660 60 625z');
  outline('M0 640L15 655 17 695 8 712 0 714z');
  parts(284, 36, 74, 12, 1); frame(272, 48, 94, 24); box(TEAL, 276, 76, 18, 16); parts(298, 76, 28, 26, 0.8); frame(326, 84, 36, 40); grid(334, 92, 22, 24);
  parts(274, 110, 14, 84, 1); frame(290, 104, 24, 92); parts(316, 104, 44, 90, 0.65); parts(280, 200, 30, 80, 1.1); frame(312, 204, 24, 74); parts(338, 196, 24, 90, 1);
  parts(276, 290, 12, 70, 1); frame(288, 288, 24, 92); parts(312, 290, 20, 90, 0.8); frame(330, 290, 32, 88); chip(334, 294, 22, 20, YELLOW); chip(334, 316, 22, 16); chip(334, 338, 22, 20, YELLOW); chip(334, 362, 22, 14, GREEN);
  vias(422, 32, 92, 18, 0.6); vias(418, 52, 10, 320); vias(427, 52, 8, 180, 0.6); vias(508, 46, 10, 330); vias(500, 52, 8, 330, 0.6); vias(426, 300, 18, 70, 1); vias(428, 354, 76, 20, 0.9); vias(424, 374, 84, 10); vias(402, 130, 26, 50); vias(514, 214, 28, 30); vias(498, 248, 14, 22, 1);
  vias(66, 472, 42, 30, 0.7); vias(108, 508, 50, 20, 1); vias(130, 480, 28, 28); vias(66, 500, 30, 130, 0.5); vias(30, 630, 60, 50, 0.5); vias(72, 630, 22, 44, 0.9); vias(28, 680, 34, 28);
  vias(98, 514, 264, 8); vias(98, 522, 190, 10, 0.9); vias(290, 522, 72, 10); vias(362, 502, 94, 28, 0.6); vias(436, 542, 354, 8); vias(450, 550, 330, 10, 0.9); vias(412, 536, 10, 160); vias(56, 688, 400, 10, 0.9); vias(56, 698, 400, 14); vias(456, 704, 270, 8); vias(510, 692, 220, 12, 0.9); vias(476, 680, 34, 24);
  vias(702, 392, 72, 10); vias(702, 402, 12, 90); vias(774, 384, 14, 160); vias(702, 506, 32, 30); vias(766, 560, 14, 60, 0.8); vias(738, 616, 20, 50, 0.6); vias(738, 670, 48, 34);
  box(TEAL, 752, 634, 30, 28); box(TEAL, 770, 662, 14, 34); box('#fff', 782, 665, 8, 10); pads(YELLOW, [[368, 672, 8, 9], [379, 672, 8, 9]]); pads(GRAY, [[354, 672, 6, 9], [394, 672, 6, 9]]);
  holes([[370, 154], [259, 233]]);
  dots([[290, 50], [302, 50], [320, 59], [290, 71], [301, 71], [311, 71], [323, 71], [335, 71], [347, 71], [290, 113], [314, 113], [290, 125], [314, 127], [293, 153], [293, 163], [314, 156], [314, 164], [302, 200], [313, 252], [313, 264], [335, 264], [326, 284], [287, 296], [287, 306], [287, 315], [308, 317], [308, 327], [287, 347], [308, 340], [308, 350], [308, 360]]);
});

// watermarks
[[703, 268], [1153, 268], [703, 668], [1153, 668]].forEach(([x, y]) => {
  out += `<text transform="translate(${x} ${y}) rotate(-45)" dy="6">XZZ@XZZHK</text>`;
});

document.getElementById('board').innerHTML = out;
```
